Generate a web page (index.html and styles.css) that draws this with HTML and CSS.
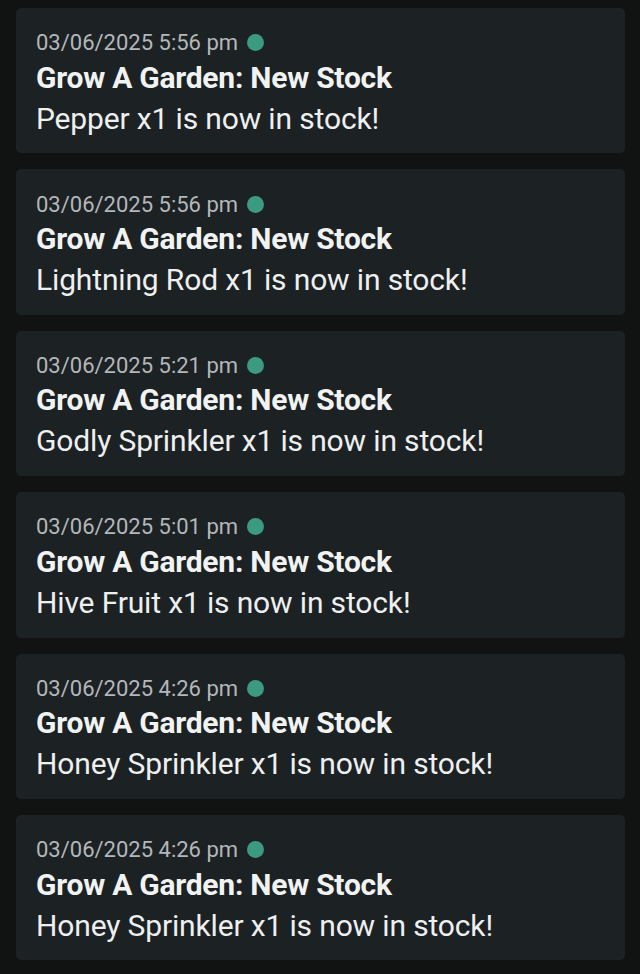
FILE: index.html
```html
<!DOCTYPE html>
<html lang="en">
  <head>
    <meta charset="UTF-8" />
    <meta name="viewport" content="width=device-width, initial-scale=1.0" />
    <title>Notifikasi</title>
    <link rel="stylesheet" href="styles.css">
  </head>
  <body>
    <div class="daftar">
      <div class="notif">
        <div class="waktu">03/06/2025 5:56 pm <span class="titik"></span></div>
        <div class="judul">Grow A Garden: New Stock</div>
        <div class="isi">Pepper x1 is now in stock!</div>
      </div>
      <div class="notif">
        <div class="waktu">03/06/2025 5:56 pm <span class="titik"></span></div>
        <div class="judul">Grow A Garden: New Stock</div>
        <div class="isi">Lightning Rod x1 is now in stock!</div>
      </div>
      <div class="notif">
        <div class="waktu">03/06/2025 5:21 pm <span class="titik"></span></div>
        <div class="judul">Grow A Garden: New Stock</div>
        <div class="isi">Godly Sprinkler x1 is now in stock!</div>
      </div>
      <div class="notif">
        <div class="waktu">03/06/2025 5:01 pm <span class="titik"></span></div>
        <div class="judul">Grow A Garden: New Stock</div>
        <div class="isi">Hive Fruit x1 is now in stock!</div>
      </div>
      <div class="notif">
        <div class="waktu">03/06/2025 4:26 pm <span class="titik"></span></div>
        <div class="judul">Grow A Garden: New Stock</div>
        <div class="isi">Honey Sprinkler x1 is now in stock!</div>
      </div>
      <div class="notif">
        <div class="waktu">03/06/2025 4:26 pm <span class="titik"></span></div>
        <div class="judul">Grow A Garden: New Stock</div>
        <div class="isi">Honey Sprinkler x1 is now in stock!</div>
      </div>
    </div>
  </body>
</html>
```
FILE: styles.css
```css
* { box-sizing: border-box }
body {
  margin: 0;
  background-color: #111212;
  font-family: Roboto, "Noto Sans", sans-serif;
  color: #f1f2f2;
}
.daftar {
  display: flex;
  flex-direction: column;
  gap: 16px;
  padding: 8px 15px 0 16px;
}
.notif {
  background-color: #1c2124;
  border-radius: 5px;
  padding: 21px 20px 14.8px 20px;
}
.waktu {
  display: flex;
  align-items: center;
  gap: 9px;
  height: 27.6px;
  font-size: 22px;
  color: #b3b7ba;
}
.titik {
  width: 17px;
  height: 17px;
  border-radius: 50%;
  background-color: #3b9a7f;
}
.judul, .isi {
  font-size: 30px;
  line-height: 41px;
}
.judul { font-weight: bold; letter-spacing: -0.25px; }
.isi { color: #eeefef; letter-spacing: -0.15px; }
```
